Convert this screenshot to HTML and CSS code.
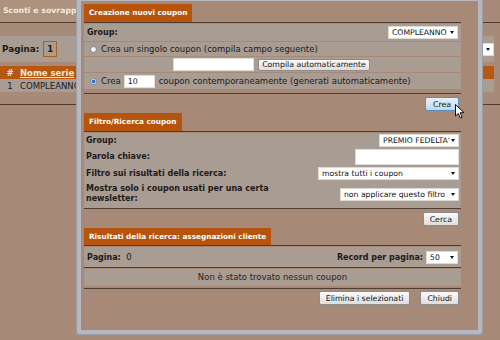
FILE: index.html
```html
<!DOCTYPE html>
<html lang="it">
<head>
    <meta charset="UTF-8">
    <title>Sconti e sovrapprezzi - Coupon</title>
    <link rel="stylesheet" href="styles.css">
</head>
<body>
    <!-- Pagina sottostante (oscurata dal dialog) -->
    <div class="page">
        <div class="topbar"><span class="tab">Sconti e sovrapprezzi</span></div>
        <div class="pager-band">
            <b>Pagina:</b> <span class="pagebox">1</span>
            <span class="sel sel-bg"><select><option>10</option></select></span>
        </div>
        <div class="series">
            <div class="series-head"><span class="col-n">#</span><a class="col-name">Nome serie</a></div>
            <div class="series-row"><span class="col-n">1</span><span class="col-name">COMPLEANNO</span></div>
        </div>
        <div class="rule"></div>
    </div>

    <!-- Dialog coupon -->
    <div class="dialog">
        <div class="sec-head"><span class="sec-title">Creazione nuovi coupon</span></div>
        <div class="rows rows-new">
            <div class="row row-group">
                <b>Group:</b>
                <span class="sel w-compleanno"><select><option>COMPLEANNO</option></select></span>
            </div>
            <div class="row row-radio">
                <input type="radio" name="mode" class="radio">
                <span>Crea un singolo coupon (compila campo seguente)</span>
            </div>
            <div class="row row-code">
                <input type="text" class="txt txt-code">
                <button class="btn btn-fill">Compila automaticamente</button>
            </div>
            <div class="row row-radio row-multi">
                <input type="radio" name="mode" class="radio" checked>
                <span>Crea</span>
                <input type="text" class="txt txt-num" value="10">
                <span>coupon contemporaneamente (generati automaticamente)</span>
            </div>
        </div>
        <div class="actions"><button class="btn btn-hover">Crea</button></div>

        <div class="sec-head"><span class="sec-title">Filtro/Ricerca coupon</span></div>
        <div class="rows rows-filter">
            <div class="frow frow-group">
                <b>Group:</b>
                <span class="sel w-premio"><select><option>PREMIO FEDELTA'</option></select></span>
            </div>
            <div class="frow">
                <b>Parola chiave:</b>
                <input type="text" class="txt txt-key">
            </div>
            <div class="frow">
                <b>Filtro sui risultati della ricerca:</b>
                <span class="sel w-filtro"><select><option>mostra tutti i coupon</option></select></span>
            </div>
            <div class="frow frow-news">
                <b>Mostra solo i coupon usati per una certa<br>newsletter:</b>
                <span class="sel w-news"><select><option>non applicare questo filtro</option></select></span>
            </div>
        </div>
        <div class="actions"><button class="btn">Cerca</button></div>

        <div class="sec-head sec-head-res"><span class="sec-title">Risultati della ricerca: assegnazioni cliente</span></div>
        <div class="res-row res-pager">
            <span><b>Pagina:</b>&nbsp; 0</span>
            <span class="per-page"><b>Record per pagina:</b> <span class="sel w-fifty"><select><option>50</option></select></span></span>
        </div>
        <div class="res-row res-empty">Non è stato trovato nessun coupon</div>
        <div class="actions actions-end">
            <button class="btn">Elimina i selezionati</button>
            <button class="btn">Chiudi</button>
        </div>
    </div>

    <svg class="cursor" width="10" height="16" viewBox="0 0 10 16">
        <path d="M0.5 0.5 L0.5 12 L3.3 9.4 L5.3 14 L7.1 13.2 L5.2 8.7 L9 8.7 Z" fill="#fff" stroke="#111" stroke-width="1" stroke-linejoin="round"/>
    </svg>
</body>
</html>
```

FILE: styles.css
```css
/* Base */
body {
    margin: 0;
    width: 500px;
    height: 340px;
    overflow: hidden;
    position: relative;
    background: #a78b78;
    font-family: "DejaVu Sans", Verdana, sans-serif;
    font-size: 8.5px;
    color: #1e1a18;
}

b {
    font-weight: bold;
    font-size: 8px;
}

/* Background page */
.page {
    width: 494px;
}

.topbar {
    height: 22px;
    width: 500px;
    border-bottom: 1px solid #4d3d33;
}

.tab {
    display: inline-block;
    height: 22px;
    line-height: 21px;
    padding: 0 5px 0 3px;
    background: #ad927e;
    color: #f3e8dc;
    font-weight: bold;
    font-size: 7.8px;
}

.pager-band {
    margin-top: 13px;
    height: 26px;
    background: #a99c93;
    display: flex;
    align-items: center;
    padding-left: 2px;
}

.pager-band b {
    font-size: 8.8px;
}

.pagebox {
    display: inline-block;
    margin-left: 4px;
    padding: 2px 3px;
    border: 1px solid #b5600f;
    font-weight: bold;
}

.sel-bg {
    margin-left: auto;
    width: 60px;
}

.series {
    margin-top: 4px;
}

.series-head,
.series-row {
    height: 13px;
    display: flex;
    align-items: center;
}

.series-head {
    background: #b6580f;
    color: #f4e6da;
    font-weight: bold;
}

.series-row {
    background: #a99c93;
}

.col-n {
    width: 20px;
    text-align: center;
}

.col-name {
    text-decoration: underline;
}

.series-row .col-name {
    text-decoration: none;
}

.rule {
    margin-top: 12px;
    width: 500px;
    border-top: 1px solid #4d3d33;
}

/* Dialog */
.dialog {
    position: absolute;
    left: 77px;
    top: -3px;
    width: 405px;
    height: 337px;
    box-sizing: border-box;
    padding: 3px 17px 0 3px;
    background: #a68a77;
    border: 4px solid #b7b8bf;
    border-radius: 0 0 3px 3px;
    box-shadow: inset 0 0 0 1px #8f9097, 0 0 0 1px #9d9ea5;
}

.sec-head {
    border-bottom: 1px solid #4d3d33;
}

.sec-title {
    display: inline-block;
    height: 18px;
    line-height: 18px;
    padding: 0 5px;
    background: #b6540e;
    color: #fff;
    font-weight: bold;
    font-size: 7.3px;
}

.sec-head-res .sec-title {
    height: 17px;
    line-height: 17px;
}

.rows {
    border-bottom: 1px solid #4d3d33;
}

.rows-new {
    display: flex;
    flex-direction: column;
    gap: 1px;
    padding: 1px 0 4px;
}

.row {
    background: #a99c93;
    display: flex;
    align-items: center;
    padding-left: 3px;
}

.row-group {
    height: 17px;
    justify-content: space-between;
    padding-right: 3px;
}

.row-radio {
    height: 14px;
}

.row-code {
    height: 15px;
    padding-left: 89px;
}

.row-multi {
    height: 16px;
}

.radio {
    appearance: none;
    width: 7px;
    height: 7px;
    margin: 0 4px 0 3px;
    border: 1px solid #8e8e8e;
    border-radius: 50%;
    background: radial-gradient(circle at 35% 35%, #fff, #d8d8d8);
    box-sizing: border-box;
}

.radio:checked {
    background: radial-gradient(circle, #2a6fc9 0 1.6px, #e8eef6 2.2px);
}

.txt {
    box-sizing: border-box;
    height: 13px;
    border: 1px solid #e2dcd8;
    background: #fff;
    padding: 0 3px;
    font-family: "DejaVu Sans", Verdana, sans-serif;
    font-size: 7.8px;
    color: #111;
    outline: none;
}

.txt-code {
    width: 81px;
    margin-right: 4px;
}

.txt-num {
    width: 31px;
    margin: 0 4px 0 3px;
}

.txt-key {
    width: 104px;
    height: 16px;
}

/* Select with custom arrow */
.sel {
    position: relative;
    display: inline-block;
    height: 13px;
}

.sel select {
    appearance: none;
    width: 100%;
    height: 13px;
    box-sizing: border-box;
    border: 1px solid #e0dad5;
    background: #fff;
    padding: 0 7px 0 3px;
    font-family: "DejaVu Sans", Verdana, sans-serif;
    font-size: 7.7px;
    color: #111;
    outline: none;
}

.sel::after {
    content: "";
    position: absolute;
    right: 4px;
    top: 5px;
    border-left: 2.5px solid transparent;
    border-right: 2.5px solid transparent;
    border-top: 3px solid #111;
}

.w-compleanno { width: 70px; }
.w-premio { width: 80px; }
.w-filtro { width: 141px; }
.w-news { width: 119px; }
.w-fifty { width: 32px; }

/* Buttons */
.btn {
    height: 14px;
    padding: 0 6px;
    border: 1px solid #8c8c8c;
    border-radius: 2px;
    background: linear-gradient(#fafafa, #dedede);
    font-family: "DejaVu Sans", Verdana, sans-serif;
    font-size: 7.8px;
    color: #111;
}

.btn-fill {
    height: 12px;
    width: 112px;
    padding: 0;
}

.btn-hover {
    padding: 0 7px;
    border-color: #5b8fb9;
    background: linear-gradient(#e6f2fb, #bcdaf1);
}

.actions {
    display: flex;
    justify-content: flex-end;
    padding: 3px 2px 2px 0;
}

.actions-end {
    gap: 10px;
    padding-top: 5px;
}

/* Filter section */
.rows-filter {
    background: #a99c93;
    margin-top: 1px;
    padding-bottom: 2px;
}

.frow {
    display: flex;
    align-items: center;
    justify-content: space-between;
    padding: 0 2px 0 2px;
    height: 17px;
}

.frow-group {
    height: 15px;
}

.frow-news {
    height: 24px;
    line-height: 10px;
}

/* Results section */
.res-row {
    background: #a99c93;
    margin-top: 1px;
    border-bottom: 1px solid #4d3d33;
}

.res-pager {
    height: 20px;
    display: flex;
    align-items: center;
    justify-content: space-between;
    padding: 0 3px;
}

.res-empty {
    height: 17px;
    line-height: 17px;
    text-align: center;
    color: #2a2420;
    border-bottom: none;
    box-shadow: 0 2px 0 #a68a77, 0 3px 0 #4d3d33;
}

.per-page {
    display: flex;
    align-items: center;
    gap: 3px;
}

/* Mouse pointer over "Crea" */
.cursor {
    position: absolute;
    left: 455px;
    top: 104px;
}
```
